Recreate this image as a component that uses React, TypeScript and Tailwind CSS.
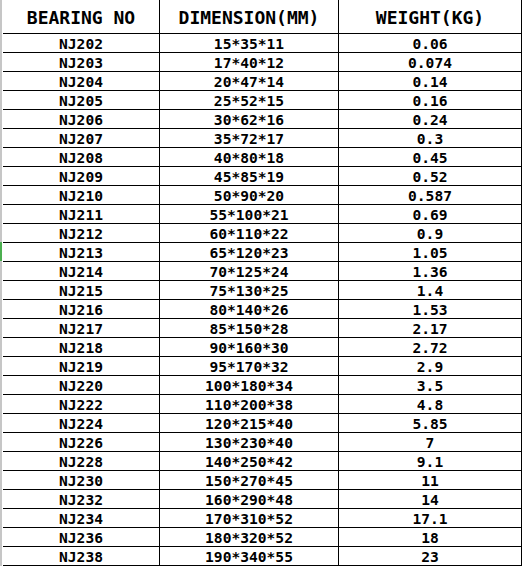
const rows: [string, string, string][] = [
  ["NJ202", "15*35*11", "0.06"],
  ["NJ203", "17*40*12", "0.074"],
  ["NJ204", "20*47*14", "0.14"],
  ["NJ205", "25*52*15", "0.16"],
  ["NJ206", "30*62*16", "0.24"],
  ["NJ207", "35*72*17", "0.3"],
  ["NJ208", "40*80*18", "0.45"],
  ["NJ209", "45*85*19", "0.52"],
  ["NJ210", "50*90*20", "0.587"],
  ["NJ211", "55*100*21", "0.69"],
  ["NJ212", "60*110*22", "0.9"],
  ["NJ213", "65*120*23", "1.05"],
  ["NJ214", "70*125*24", "1.36"],
  ["NJ215", "75*130*25", "1.4"],
  ["NJ216", "80*140*26", "1.53"],
  ["NJ217", "85*150*28", "2.17"],
  ["NJ218", "90*160*30", "2.72"],
  ["NJ219", "95*170*32", "2.9"],
  ["NJ220", "100*180*34", "3.5"],
  ["NJ222", "110*200*38", "4.8"],
  ["NJ224", "120*215*40", "5.85"],
  ["NJ226", "130*230*40", "7"],
  ["NJ228", "140*250*42", "9.1"],
  ["NJ230", "150*270*45", "11"],
  ["NJ232", "160*290*48", "14"],
  ["NJ234", "170*310*52", "17.1"],
  ["NJ236", "180*320*52", "18"],
  ["NJ238", "190*340*55", "23"],
];

const cols = "grid grid-cols-[157px_179px_183px]";
const cell = "border-r border-b border-black flex items-center justify-center";

function App() {
  return (
    <div className="flex w-[523px] h-[566px] overflow-hidden bg-white font-['DejaVu_Sans_Mono',monospace] font-bold text-black">
      {/* row header strip on the left edge */}
      <div className="flex flex-col w-[2px] shrink-0 bg-[#c6c6c6]">
        <div className="h-[242px]" />
        <div className="h-[19px] bg-[#4caf50]" />
      </div>
      <div className="ml-[1px] flex flex-col">
        <div className={`${cols} h-[34px] text-[18px] leading-none`}>
          <div className={`${cell} pt-[3px]`}>BEARING NO</div>
          <div className={`${cell} pt-[3px]`}>DIMENSION(MM)</div>
          <div className={`${cell} pt-[3px]`}>WEIGHT(KG)</div>
        </div>
        {rows.map(([no, dim, wt]) => (
          <div key={no} className={`${cols} h-[19px] text-[14.6px] leading-none`}>
            <div className={`${cell} pt-[2px]`}>{no}</div>
            <div className={`${cell} pt-[2px]`}>{dim}</div>
            <div className={`${cell} pt-[2px]`}>{wt}</div>
          </div>
        ))}
      </div>
    </div>
  );
}

export default App;
